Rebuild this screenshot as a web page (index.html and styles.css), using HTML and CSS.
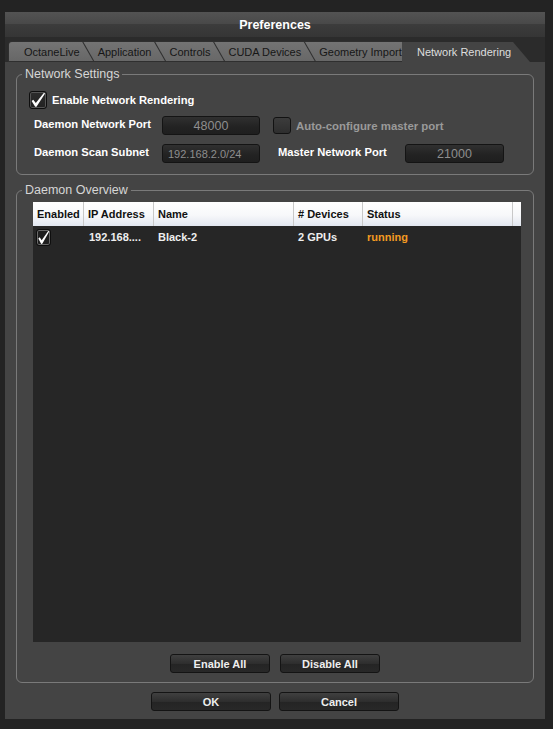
FILE: index.html
```html
<!DOCTYPE html>
<html>
<head>
<meta charset="utf-8">
<title>Preferences</title>
<link rel="stylesheet" href="styles.css">
</head>
<body>
<div class="window">
  <div class="titlebar">Preferences</div>
  <div class="tabbar">
    <div class="tab first"><span>OctaneLive</span></div>
    <div class="tab"><span>Application</span></div>
    <div class="tab"><span>Controls</span></div>
    <div class="tab"><span>CUDA Devices</span></div>
    <div class="tab last"><span>Geometry Import</span></div>
    <div class="tab-active"><span>Network Rendering</span></div>
  </div>
  <div class="panel">
    <fieldset class="group g1">
      <legend>Network Settings</legend>
      <div class="row r1">
        <span class="cb big checked"><svg viewBox="0 0 18 18" preserveAspectRatio="none"><path d="M1.8 10.2 L3.7 8.8 L6.5 12.4 L15.5 1.1 L17.1 1.5 L7.3 16.5 L5.8 16.7 Z" fill="#fff"/></svg></span>
        <span class="lbl">Enable Network Rendering</span>
      </div>
      <div class="row r2">
        <span class="lbl w128">Daemon Network Port</span>
        <div class="field center">48000</div>
        <span class="cb big off"></span>
        <span class="lbl dim">Auto-configure master port</span>
      </div>
      <div class="row r3">
        <span class="lbl w128">Daemon Scan Subnet</span>
        <div class="field left">192.168.2.0/24</div>
        <span class="lbl w127 ml18">Master Network Port</span>
        <div class="field center w99">21000</div>
      </div>
    </fieldset>
    <fieldset class="group g2">
      <legend>Daemon Overview</legend>
      <div class="table">
        <div class="thead">
          <div class="th c1">Enabled</div>
          <div class="th">IP Address</div>
          <div class="th">Name</div>
          <div class="th"># Devices</div>
          <div class="th">Status</div>
          <div class="th"></div>
        </div>
        <div class="trow">
          <div class="td c1"><span class="cb small checked"><svg viewBox="0 0 18 18" preserveAspectRatio="none"><path d="M1.8 10.2 L3.7 8.8 L6.5 12.4 L15.5 1.1 L17.1 1.5 L7.3 16.5 L5.8 16.7 Z" fill="#fff"/></svg></span></div>
          <div class="td">192.168....</div>
          <div class="td">Black-2</div>
          <div class="td">2 GPUs</div>
          <div class="td running">running</div>
          <div class="td"></div>
        </div>
      </div>
      <div class="btns inner">
        <button class="btn w100">Enable All</button>
        <button class="btn w100">Disable All</button>
      </div>
    </fieldset>
    <div class="btns outer">
      <button class="btn w120">OK</button>
      <button class="btn w120">Cancel</button>
    </div>
  </div>
</div>
</body>
</html>
```
FILE: styles.css
```css
html, body {
  margin: 0;
  padding: 0;
  background: #232323;
  overflow: hidden;
}
body {
  font-family: "Liberation Sans", Arial, sans-serif;
}
.window {
  margin: 12px 0 0 5px;
  width: 540px;
  height: 707px;
  display: flex;
  flex-direction: column;
}
.titlebar {
  height: 25px;
  flex: none;
  background: linear-gradient(#535353 0, #494949 46%, #3c3c3c 50%, #353535 100%);
  color: #fff;
  font-weight: bold;
  font-size: 12.5px;
  padding-top: 1px;
  box-sizing: border-box;
  display: flex;
  align-items: center;
  justify-content: center;
}
.tabbar {
  height: 25px;
  flex: none;
  background: #2b2b2b;
  display: flex;
  align-items: flex-end;
  padding: 0 15px 0 3px;
}
.tab {
  position: relative;
  flex: none;
  height: 21px;
  box-sizing: border-box;
  display: flex;
  align-items: center;
  padding: 0 14px 0 16px;
  margin-right: -12px;
  font-size: 11px;
  color: #161616;
  white-space: nowrap;
  background: #2f2f2f;
  clip-path: polygon(0 0, 100% 0, 100% 100%, 12px 100%);
}
.tab::before {
  content: "";
  position: absolute;
  inset: 0;
  background: linear-gradient(#747474, #676767);
  clip-path: polygon(1.8px 1px, 100% 1px, 100% calc(100% - 1px), 12.6px calc(100% - 1px));
}
.tab span {
  position: relative;
}
.tab.first {
  clip-path: none;
  border-radius: 4px 0 0 0;
}
.tab.first::before {
  clip-path: none;
  inset: 1px 0 1px 1px;
  border-radius: 3px 0 0 0;
}
.tab.last {
  flex: 1 1 0;
  min-width: 0;
  overflow: hidden;
  margin-right: 0;
  padding-right: 0;
}
.tab-active {
  flex: none;
  width: 128px;
  height: 20px;
  box-sizing: border-box;
  padding-left: 15px;
  display: flex;
  align-items: center;
  background: #444;
  color: #dedede;
  font-size: 11px;
  white-space: nowrap;
  clip-path: polygon(0 0, calc(100% - 17px) 0, 100% 100%, 0 100%);
}
.panel {
  flex: 1;
  background: #444;
  padding-top: 5px;
  display: flex;
  flex-direction: column;
}
fieldset.group {
  margin: 0 11px;
  border: 1px solid #7a7a7a;
  border-radius: 6px;
  min-width: 0;
}
fieldset.group legend {
  margin-left: 5px;
  padding: 0 3px;
  font-size: 12.5px;
  line-height: 14px;
  color: #d6d6d6;
}
.g1 {
  padding: 10px 0 11px 0;
}
.row {
  display: flex;
  align-items: center;
}
.r1 {
  padding-left: 12px;
  height: 18px;
  gap: 5px;
}
.r2 {
  margin-top: 7px;
  padding-left: 17px;
  height: 19px;
}
.r3 {
  margin-top: 9px;
  padding-left: 17px;
  height: 19px;
}
.lbl {
  font-size: 11.2px;
  font-weight: bold;
  color: #fff;
  white-space: nowrap;
}
.r2 .lbl.w128, .r3 .lbl {
  padding-bottom: 4px;
}
.w128 { width: 128px; flex: none; }
.w127 { width: 127px; flex: none; }
.ml18 { margin-left: 18px; }
.lbl.dim {
  color: #9a9a9a;
  margin-left: 5px;
  font-size: 11.4px;
}
.field {
  width: 98px;
  height: 19px;
  box-sizing: border-box;
  border: 1px solid #141414;
  border-radius: 3px;
  background: linear-gradient(#303030, #222 60%, #1f1f1f);
  color: #8e8e8e;
  display: flex;
  align-items: center;
  flex: none;
}
.field.center {
  justify-content: center;
  font-size: 12.5px;
}
.field.left {
  padding-left: 5px;
  font-size: 11px;
}
.field.w99 { width: 99px; }
.cb {
  display: inline-block;
  box-sizing: border-box;
  border: 1px solid #121212;
  border-radius: 3px;
  background: linear-gradient(#3a3a3a, #2a2a2a);
  flex: none;
}
.cb svg {
  display: block;
  width: 100%;
  height: 100%;
}
.cb.big {
  width: 18px;
  height: 18px;
}
.cb.big.checked {
  background: linear-gradient(#2c2c2c, #222);
  border-color: #0e0e0e;
  box-shadow: inset 0 0 0 1px #555;
}
.cb.off {
  margin-left: 13px;
  height: 17px;
  background: linear-gradient(#3c3c3c, #2e2e2e);
}
.cb.small {
  width: 15px;
  height: 17px;
  background: #1e1e1e;
  border-color: #0e0e0e;
  box-shadow: inset 0 0 0 1px #6a6a6a;
}
.g2 {
  margin-top: 8px !important;
  padding: 5px 12px 9px 0;
}
.table {
  height: 440px;
  margin-left: 16px;
  background: #262626;
  display: flex;
  flex-direction: column;
}
.thead, .trow {
  display: grid;
  grid-template-columns: 50px 70px 140px 69px 150px 1fr;
}
.thead {
  height: 24px;
  background: linear-gradient(#ffffff, #f7f8fa 55%, #e2e7f0);
}
.th {
  font-size: 11px;
  font-weight: bold;
  color: #111;
  display: flex;
  align-items: center;
  padding-left: 4px;
  border-left: 1px solid #c8c8c8;
  white-space: nowrap;
}
.th.c1 {
  border-left: none;
}
.trow {
  height: 22px;
}
.td {
  font-size: 11px;
  font-weight: bold;
  color: #eee;
  display: flex;
  align-items: center;
  padding-left: 5px;
  white-space: nowrap;
}
.td.c1 {
  padding-left: 3px;
}
.td:nth-child(2) {
  padding-left: 6px;
}
.td.running {
  color: #f39a22;
}
.btns {
  display: flex;
  justify-content: center;
}
.btns.inner {
  margin-top: 12px;
  gap: 10px;
  padding-left: 16px;
  padding-right: 4px;
}
.btns.outer {
  margin-top: 9px;
  gap: 8px;
}
.btn {
  height: 19px;
  box-sizing: border-box;
  border: 1px solid #141414;
  border-radius: 3px;
  background: linear-gradient(#404040, #2e2e2e 50%, #242424 52%, #282828);
  color: #eee;
  font-family: "Liberation Sans", Arial, sans-serif;
  font-size: 11px;
  font-weight: bold;
  padding: 0;
}
.w100 { width: 100px; }
.w120 { width: 120px; }
```
